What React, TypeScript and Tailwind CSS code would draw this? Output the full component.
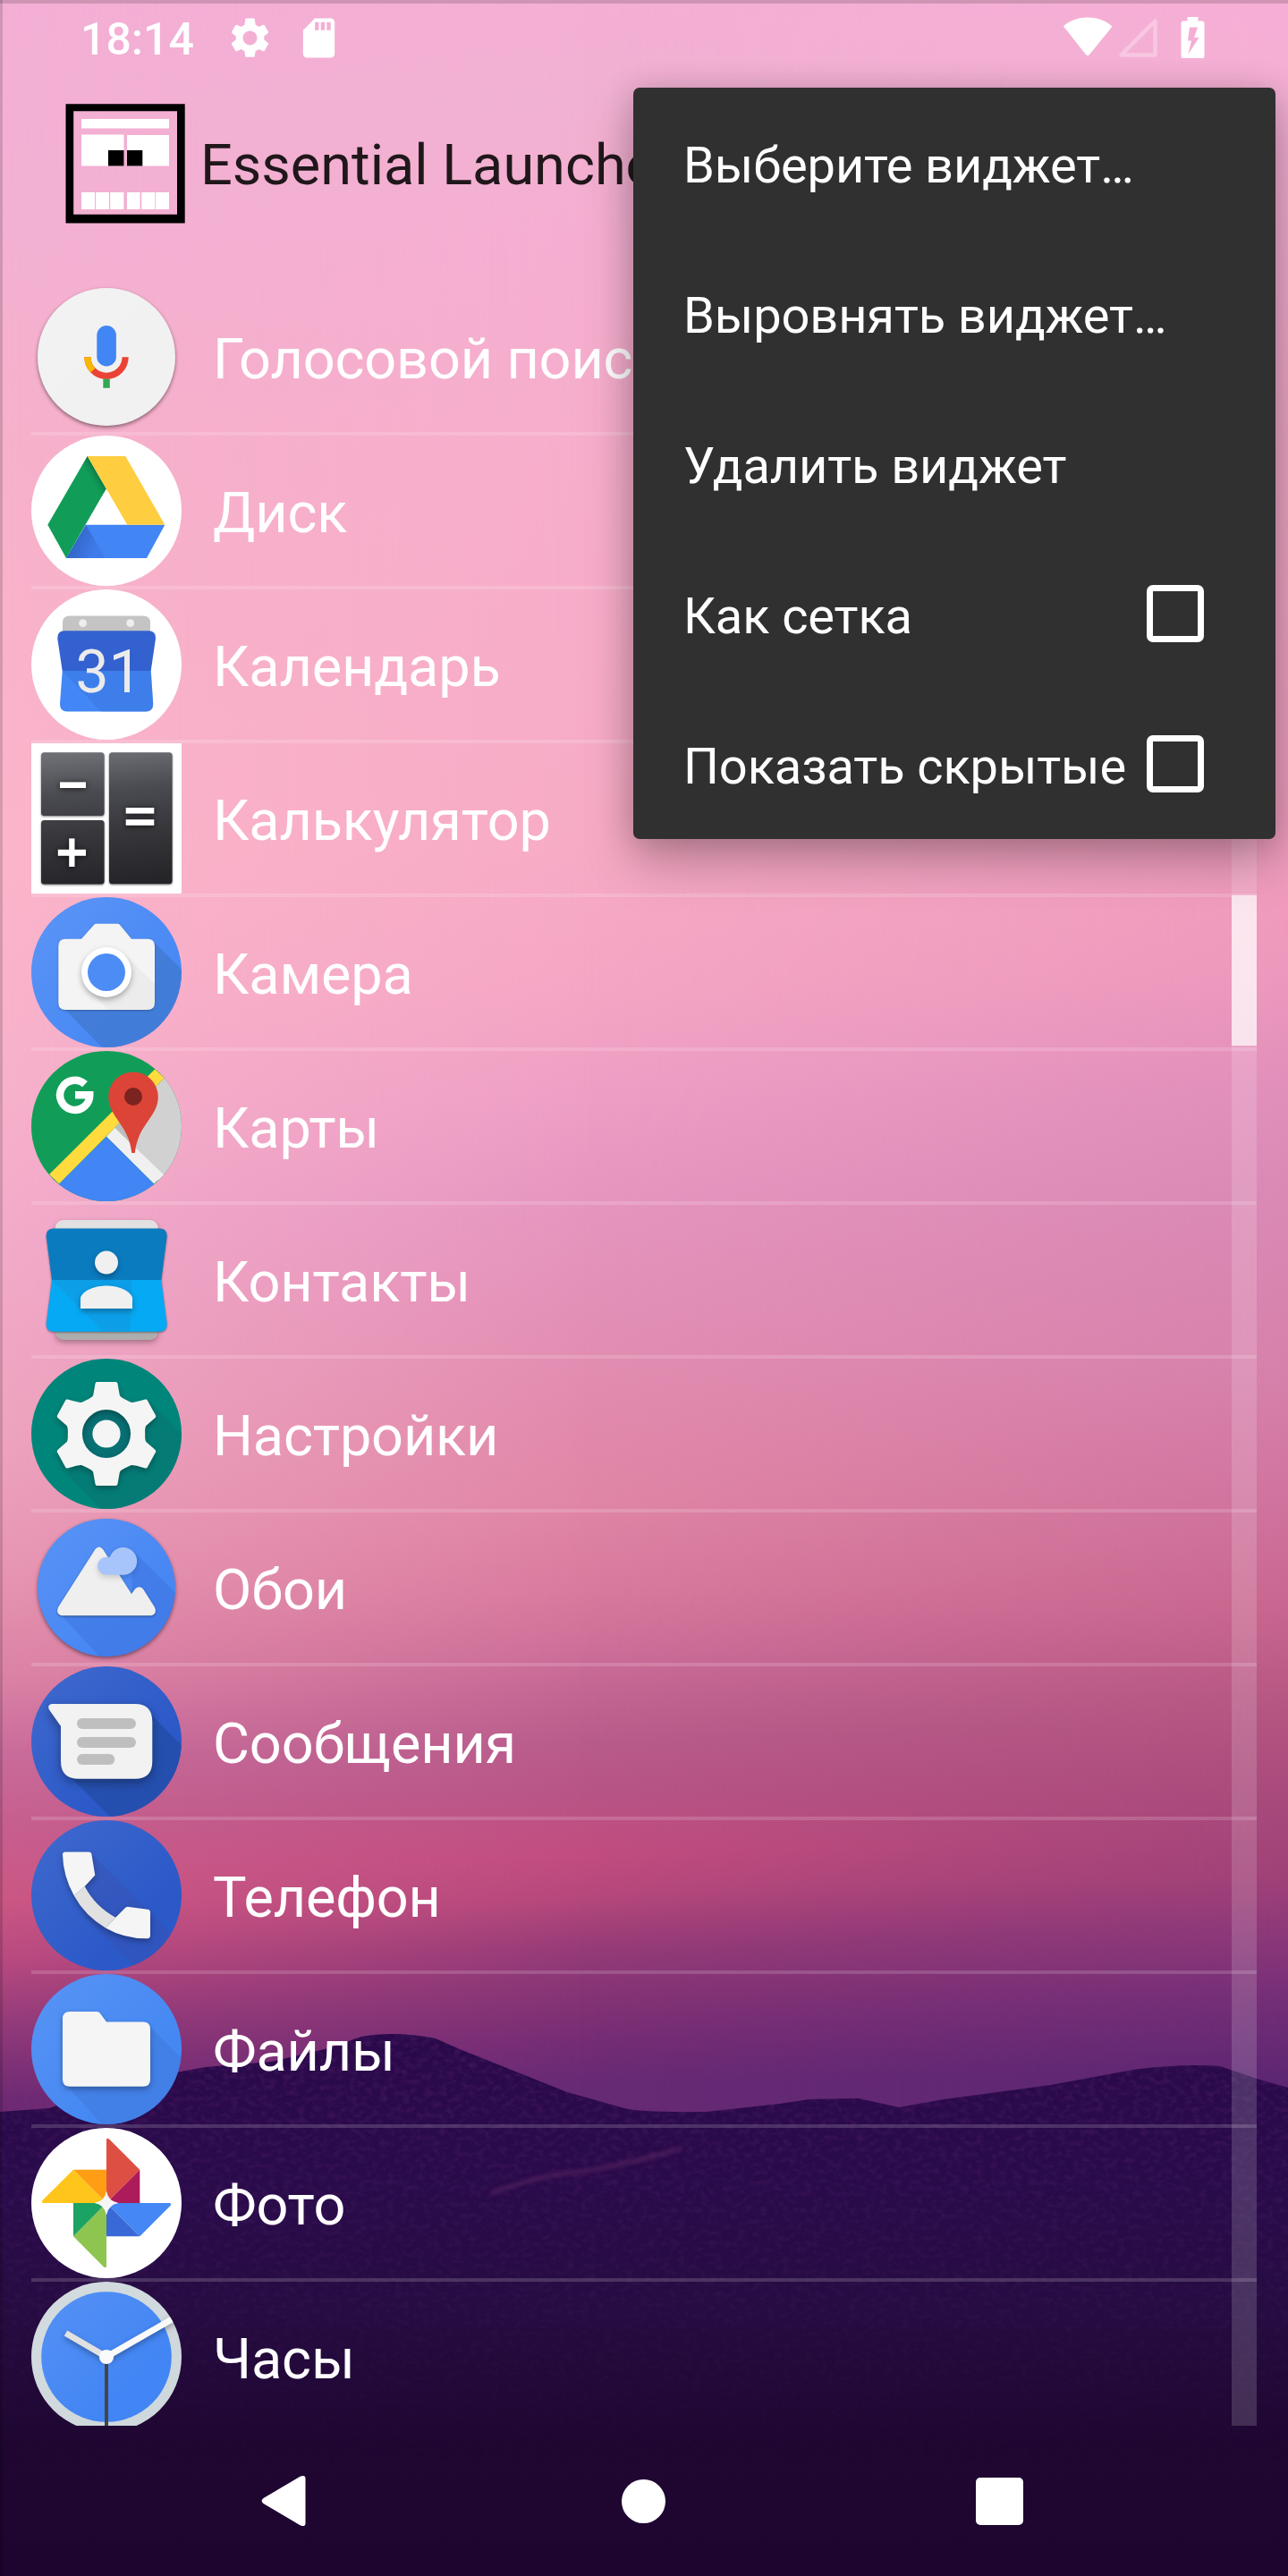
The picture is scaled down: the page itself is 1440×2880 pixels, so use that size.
import type { ReactNode } from "react";

function Wallpaper() {
  const hills =
    "M0 2361 L55 2357 L100 2342 L138 2331 L197 2317 L230 2311 L303 2305 L367 2290 L404 2277 Q441 2270 487 2279 L514 2291 L579 2317 L634 2339 L698 2357 Q716 2362 790 2361 L872 2352 L905 2347 L960 2346 L1005 2356 L1056 2347 L1175 2331 L1267 2314 Q1322 2307 1364 2310 L1405 2324 L1440 2334 V2880 H0 Z";
  return (
    <svg className="absolute inset-0" width="1440" height="2880" viewBox="0 0 1440 2880">
      <defs>
        <linearGradient id="skyLeft" gradientUnits="userSpaceOnUse" x1="0" y1="0" x2="0" y2="2400">
          <stop offset="0" stopColor="#f4afd5" />
          <stop offset="0.096" stopColor="#f3b1d3" />
          <stop offset="0.21" stopColor="#f7b1cb" />
          <stop offset="0.396" stopColor="#fbb5ca" />
          <stop offset="0.51" stopColor="#f7b1cb" />
          <stop offset="0.574" stopColor="#f3abca" />
          <stop offset="0.67" stopColor="#eea3be" />
          <stop offset="0.733" stopColor="#e795b2" />
          <stop offset="0.78" stopColor="#dc83a6" />
          <stop offset="0.817" stopColor="#ca6c9b" />
          <stop offset="0.848" stopColor="#c7608f" />
          <stop offset="0.885" stopColor="#cb5785" />
          <stop offset="0.913" stopColor="#b84a80" />
          <stop offset="0.944" stopColor="#923a7a" />
          <stop offset="0.978" stopColor="#6f2a74" />
        </linearGradient>
        <linearGradient id="skyMid" gradientUnits="userSpaceOnUse" x1="-40" y1="0" x2="40" y2="2400">
          <stop offset="0" stopColor="#f5aed5" />
          <stop offset="0.054" stopColor="#f1b1d1" />
          <stop offset="0.125" stopColor="#f5aed0" />
          <stop offset="0.25" stopColor="#f6adca" />
          <stop offset="0.4" stopColor="#f7abc5" />
          <stop offset="0.467" stopColor="#f5a6c4" />
          <stop offset="0.521" stopColor="#ee9ec4" />
          <stop offset="0.567" stopColor="#e696bf" />
          <stop offset="0.625" stopColor="#e38fb5" />
          <stop offset="0.708" stopColor="#e086a6" />
          <stop offset="0.75" stopColor="#d87a9e" />
          <stop offset="0.779" stopColor="#cc6e98" />
          <stop offset="0.82" stopColor="#b85c8b" />
          <stop offset="0.842" stopColor="#b85587" />
          <stop offset="0.873" stopColor="#c24d7f" />
          <stop offset="0.892" stopColor="#b6487c" />
          <stop offset="0.917" stopColor="#953b77" />
          <stop offset="0.958" stopColor="#762d74" />
          <stop offset="0.98" stopColor="#672a75" />
        </linearGradient>
        <linearGradient id="skyRight" gradientUnits="userSpaceOnUse" x1="0" y1="0" x2="0" y2="2400">
          <stop offset="0" stopColor="#f6aed6" />
          <stop offset="0.042" stopColor="#f4afd3" />
          <stop offset="0.2" stopColor="#eda5c4" />
          <stop offset="0.42" stopColor="#f09bbd" />
          <stop offset="0.458" stopColor="#ec97bc" />
          <stop offset="0.51" stopColor="#e08eba" />
          <stop offset="0.554" stopColor="#da89b5" />
          <stop offset="0.637" stopColor="#d681ab" />
          <stop offset="0.7" stopColor="#cf739d" />
          <stop offset="0.75" stopColor="#c8668f" />
          <stop offset="0.792" stopColor="#b65782" />
          <stop offset="0.833" stopColor="#a94b7c" />
          <stop offset="0.875" stopColor="#9f4178" />
          <stop offset="0.904" stopColor="#8a3779" />
          <stop offset="0.93" stopColor="#752f77" />
          <stop offset="0.97" stopColor="#5c2672" />
        </linearGradient>
        <linearGradient id="fadeMid" x1="0" x2="1" y1="0" y2="0">
          <stop offset="0" stopColor="#000" />
          <stop offset="0.45" stopColor="#fff" />
        </linearGradient>
        <linearGradient id="fadeRight" x1="0" x2="1" y1="0" y2="0">
          <stop offset="0.45" stopColor="#000" />
          <stop offset="1" stopColor="#fff" />
        </linearGradient>
        <mask id="maskMid">
          <rect width="1440" height="2880" fill="url(#fadeMid)" />
        </mask>
        <mask id="maskRight">
          <rect width="1440" height="2880" fill="url(#fadeRight)" />
        </mask>
        <linearGradient id="ground" gradientUnits="userSpaceOnUse" x1="0" y1="2270" x2="0" y2="2880">
          <stop offset="0" stopColor="#2a094a" />
          <stop offset="0.3" stopColor="#290b4a" />
          <stop offset="0.5" stopColor="#260c42" />
          <stop offset="0.75" stopColor="#1f0732" />
          <stop offset="1" stopColor="#1e052f" />
        </linearGradient>
        <linearGradient id="grainFade" x1="0" x2="0" y1="0" y2="1">
          <stop offset="0" stopColor="#fff" />
          <stop offset="1" stopColor="#000" />
        </linearGradient>
        <mask id="grainMask" maskUnits="userSpaceOnUse" x="0" y="2260" width="1440" height="620">
          <rect y="2260" width="1440" height="500" fill="url(#grainFade)" />
        </mask>
        <filter id="grain" filterUnits="userSpaceOnUse" x="0" y="2260" width="1440" height="620">
          <feTurbulence type="fractalNoise" baseFrequency="0.12 0.16" numOctaves="2" seed="4" result="n" />
          <feColorMatrix in="n" values="0 0 0 0 0.3  0 0 0 0 0.06  0 0 0 0 0.32  0 2 0 0 -0.8" />
          <feComposite in2="SourceGraphic" operator="in" />
        </filter>
        <filter id="soft">
          <feGaussianBlur stdDeviation="2" />
        </filter>
      </defs>
      <rect width="1440" height="2880" fill="url(#skyLeft)" />
      <rect width="1440" height="2880" fill="url(#skyMid)" mask="url(#maskMid)" />
      <rect width="1440" height="2880" fill="url(#skyRight)" mask="url(#maskRight)" />
      <path d={hills} fill="url(#ground)" />
      <g mask="url(#grainMask)">
        <path d={hills} filter="url(#grain)" opacity="0.22" />
      </g>
      <path d="M548 2453 Q600 2432 650 2428 Q700 2420 762 2402" fill="none" stroke="#54205f" strokeWidth="5" opacity="0.7" filter="url(#soft)" />
      <rect width="1440" height="4" fill="#000" opacity="0.15" />
      <rect width="3" height="2880" fill="#000" opacity="0.15" />
    </svg>
  );
}

const glyphShadow = "drop-shadow-[0_3px_3px_rgba(0,0,0,0.3)]";

function Icon({
  id,
  children,
  bg,
  r = 84,
  sheen = 0.1,
}: {
  id: string;
  children: ReactNode;
  bg?: string;
  r?: number;
  sheen?: number;
}) {
  return (
    <svg className="block shrink-0" width="168" height="168" viewBox="0 0 168 168">
      <defs>
        <clipPath id={id}>
          <circle cx="84" cy="84" r={r} />
        </clipPath>
        <linearGradient id={id + "Sheen"} x1="0" y1="0" x2="0.7" y2="0.7">
          <stop offset="0" stopColor="#fff" stopOpacity={sheen} />
          <stop offset="1" stopColor="#fff" stopOpacity="0" />
        </linearGradient>
      </defs>
      {bg && (
        <g className={r < 84 ? "drop-shadow-[0_2px_2px_rgba(0,0,0,0.45)]" : ""}>
          <circle cx="84" cy="84" r={r} fill={bg} />
          <circle cx="84" cy="84" r={r} fill={`url(#${id}Sheen)`} />
        </g>
      )}
      <g clipPath={bg ? `url(#${id})` : undefined}>{children}</g>
    </svg>
  );
}

const MicIcon = () => (
  <Icon id="mic" bg="#f1f1f1" r={77}>
    <rect x="73.3" y="49" width="21.6" height="45.5" rx="10.8" fill="#4285f4" />
    <path d="M62.9 84.2 A21.1 21.1 0 0 0 105.1 84.2" fill="none" stroke="#ea4335" strokeWidth="7.2" />
    <path d="M62.9 84.2 A21.1 21.1 0 0 0 69 99" fill="none" stroke="#f9b602" strokeWidth="7.2" />
    <rect x="80.3" y="108.6" width="7.5" height="10.2" fill="#34a853" />
  </Icon>
);

const DriveIcon = () => (
  <Icon id="drive" bg="#fff">
    <defs>
      <linearGradient id="driveShade" gradientUnits="userSpaceOnUse" x1="48" y1="118" x2="72" y2="128">
        <stop offset="0" stopColor="#3367c9" />
        <stop offset="1" stopColor="#3f7ceb" />
      </linearGradient>
      <linearGradient id="driveFold" gradientUnits="userSpaceOnUse" x1="73" y1="42" x2="63" y2="48">
        <stop offset="0" stopColor="#0b6e3d" stopOpacity="0.7" />
        <stop offset="1" stopColor="#119d58" stopOpacity="0" />
      </linearGradient>
    </defs>
    <path d="M61 99.8 H149.3 L129 137 H39 Z" fill="#4285f4" />
    <path d="M61 99.8 L83 137 H39 Z" fill="url(#driveShade)" />
    <path d="M62.7 23 L83.7 59.6 L39 137 L18.3 99.8 Z" fill="#119d58" />
    <path d="M62.7 23 L83.7 59.6 L78 69 L57 33 Z" fill="url(#driveFold)" />
    <path d="M62.7 23 H105.3 L149.3 99.8 H107.3 Z" fill="#ffcd40" />
  </Icon>
);

const CalendarIcon = () => (
  <Icon id="cal" bg="#fff">
    <path d="M35 50 V37 Q35 29.4 43 29.4 H125 Q133 29.4 133 37 V50 Z" fill="#c4c4c4" />
    <circle cx="57.6" cy="37.7" r="4.4" fill="#eee" />
    <circle cx="110.7" cy="37.7" r="4.4" fill="#eee" />
    <path d="M37 46.3 H131 Q139.5 46.3 139 55 L133.7 91 H34.7 L29.3 55 Q29 46.3 37 46.3 Z" fill="#3361d0" />
    <path d="M34.7 91 H133.7 L136.2 128 Q136.2 136.5 128 136.5 H40 Q32 136.5 32 128 Z" fill="#4386f5" />
    <path d="M34.7 91 H133.7 L136.2 128 Q136.2 136.5 128 136.5 H78 Z" fill="#3b78e2" opacity="0.55" />
    <text x="86.5" y="115.3" textAnchor="middle" fontFamily="Roboto, sans-serif" fontSize="66" fill="#ebebeb">
      31
    </text>
  </Icon>
);

const CalculatorIcon = () => (
  <svg className="block shrink-0" width="168" height="168" viewBox="0 0 168 168">
    <defs>
      <linearGradient id="keys" gradientUnits="userSpaceOnUse" x1="70" y1="10" x2="84" y2="158">
        <stop offset="0" stopColor="#6e6f74" />
        <stop offset="0.3" stopColor="#4a4b51" />
        <stop offset="0.6" stopColor="#37373c" />
        <stop offset="1" stopColor="#252429" />
      </linearGradient>
    </defs>
    <rect width="168" height="168" fill="#fff" />
    <g fill="url(#keys)" className="drop-shadow-[0_1px_1px_rgba(0,0,0,0.5)]">
      <rect x="11" y="10.3" width="70.6" height="70.6" rx="3.5" />
      <rect x="11" y="86" width="70.6" height="71.4" rx="3.5" />
      <rect x="87" y="10.3" width="70.6" height="147" rx="3.5" />
    </g>
    <g fill="#fff" className="drop-shadow-[0_1px_3px_rgba(0,0,0,0.7)]">
      <rect x="32" y="43.4" width="29" height="6.6" />
      <rect x="29.8" y="118.8" width="31.2" height="7" />
      <rect x="42.2" y="106.4" width="6.3" height="31.6" />
      <rect x="105.7" y="72" width="31.6" height="6.6" />
      <rect x="105.7" y="85.2" width="31.6" height="6.6" />
    </g>
  </svg>
);

const CameraIcon = () => (
  <Icon id="cam" bg="#4989f5">
    <path d="M136 49 L230 143 V230 H140 L36 124 Z" fill="#3a6cb8" opacity="0.45" />
    <g className="drop-shadow-[0_1px_1px_rgba(0,0,0,0.25)]">
      <path d="M38.3 46.7 H56 L70 31 Q71 29.8 73 29.8 H96 Q98 29.8 99 31 L112 46.7 H130 Q138 46.7 138 54.7 V118 Q138 126 130 126 H38.3 Q30.3 126 30.3 118 V54.7 Q30.3 46.7 38.3 46.7 Z" fill="#f4f4f4" />
    </g>
    <path d="M104 64 L138 97 V118 Q138 126 130 126 H86 L64 104 Z" fill="#000" opacity="0.03" />
    <circle cx="84" cy="84" r="28" fill="#fff" className={glyphShadow} />
    <circle cx="84" cy="84" r="21" fill="#4c8cf5" />
  </Icon>
);

const MapsIcon = () => (
  <Icon id="maps" bg="#119d58" sheen={0}>
    <path d="M148.7 30.3 L84 95.8 L148 150 L180 150 V30 Z" fill="#d1d1d1" />
    <path d="M93.3 85.8 L148.2 138.5 L137 148.4 L84 95.8 Z" fill="#f0f0f0" />
    <path d="M84 95.8 L137 148.4 V170 H31 V148.4 Z" fill="#4285f4" />
    <path d="M138.3 20.3 L148.7 30.3 L31 148.4 L20 138 Z" fill="#ffdb3e" />
    <path d="M93.3 85.8 L99 80 L112 101 V104 Z" fill="#bdbdbd" />
    <path d="M114 23.5 A27.8 27.8 0 0 1 141.8 51 C141.8 74 119 82 115.8 114 H112.2 C109 82 86.2 74 86.2 51 A27.8 27.8 0 0 1 114 23.5 Z" fill="#db4437" />
    <circle cx="114" cy="51" r="10" fill="#7b231e" />
    <path d="M60 37.2 A16.6 16.6 0 1 0 65.3 49.2 H49" fill="none" stroke="#fff" strokeWidth="8.4" />
  </Icon>
);

const ContactsIcon = () => (
  <Icon id="contacts">
    <defs>
      <linearGradient id="cardBack" x1="0" x2="0" y1="0" y2="1">
        <stop offset="0.5" stopColor="#e1e1e1" />
        <stop offset="0.6" stopColor="#adadad" />
      </linearGradient>
    </defs>
    <rect x="26.7" y="17" width="115" height="134" rx="9" fill="url(#cardBack)" className={glyphShadow} />
    <g className="drop-shadow-[0_1px_1px_rgba(0,0,0,0.4)]">
      <path d="M25 26.4 H143.5 Q152 26.4 151.7 35 L145.3 84 H23 L16.7 35 Q16.5 26.4 25 26.4 Z" fill="#0b7bbf" />
      <path d="M23 84 H145.3 L151.7 133 Q151.7 141.8 143.5 141.8 H25 Q16.7 141.8 16.7 133 Z" fill="#06a9f4" />
    </g>
    <path d="M23 84 H112 V116 L110 141.8 H80 Z" fill="#1397dc" opacity="0.55" />
    <g fill="#f0f0f0" className={glyphShadow}>
      <circle cx="84" cy="64.6" r="13" />
      <path d="M55 116 V104 C58 95 72 90.5 84 90.5 C96 90.5 110 95 113 104 V116 Z" />
    </g>
  </Icon>
);

const SettingsIcon = () => (
  <Icon id="settings" bg="#00857a" sheen={0}>
    <path d="M130 46 L230 146 V230 H140 L40 130 Z" fill="#0b6e71" opacity="0.45" />
    <circle cx="84" cy="84" r="30" fill="#086f73" />
    <path
      fillRule="evenodd"
      className={glyphShadow}
      fill="#f5f5f5"
      stroke="#f5f5f5"
      strokeWidth="4"
      strokeLinejoin="round"
      d="M73.5 28 H94.5 L97 42 Q98 45 111 50.8 Q114 51.5 128 47.5 L137.3 64.5 L127 73.4 Q124.8 76 125.2 84 Q124.8 92 127 94.6 L137.3 103.5 L128 120.5 Q114 116.5 111 117.2 Q98 123 97 126 L94.5 140 H73.5 L71 126 Q70 123 57 117.2 Q54 116.5 40 120.5 L30.7 103.5 L41 94.6 Q43.2 92 42.8 84 Q43.2 76 41 73.4 L30.7 64.5 L40 47.5 Q54 51.5 57 50.8 Q70 45 71 42 Z M84 55 A29 29 0 1 0 84 113 A29 29 0 1 0 84 55 Z"
    />
    <circle cx="84" cy="84" r="15.6" fill="#f5f5f5" />
  </Icon>
);

const WallpapersIcon = () => (
  <Icon id="walls" bg="#4787f4" r={77}>
    <path d="M114 43 L230 159 V230 H140 L32 113 L112 91 Z" fill="#3c72dd" opacity="0.5" />
    <path
      d="M71.5 41 Q75.7 36 80 41 L112 91 L116 85.5 Q120.7 81 125 85.5 L138 106 Q141 113.5 134 115.3 H34 Q27 113.5 30 106 Z"
      fill="#efefef"
      className="drop-shadow-[0_1px_1px_rgba(0,0,0,0.4)]"
    />
    <path
      d="M84 69.8 A9.8 9.8 0 1 1 84 49.8 H88 A15.4 15.4 0 1 1 104 69.8 Z"
      fill="#a7c5fa"
      className="drop-shadow-[0_3px_3px_rgba(0,0,0,0.15)]"
    />
  </Icon>
);

const MessagesIcon = () => (
  <Icon id="messages" bg="#2b59c8">
    <path d="M130 50 L230 150 V230 H150 L40 120 Z" fill="#214a9f" opacity="0.6" />
    <path
      d="M23 42 H116 Q135.3 42 135.3 62 V106 Q135.3 125.8 116 125.8 H53 Q33 125.8 33 106 V67 L20 48.5 Q17.5 43 23 42 Z"
      fill="#f2f2f2"
      className="drop-shadow-[0_4px_6px_rgba(0,0,0,0.35)]"
    />
    <g fill="#bfbfbf">
      <rect x="51" y="58" width="66" height="12" rx="6" />
      <rect x="51" y="79" width="66" height="12" rx="6" />
      <rect x="51" y="98" width="42.3" height="12" rx="6" />
    </g>
  </Icon>
);

const PhoneIcon = () => (
  <Icon id="phone" bg="#2b59c8">
    <path d="M66 36 L230 200 V260 H212 L60 108 Z" fill="#3a50b0" opacity="0.4" />
    <g className={glyphShadow}>
      <path d="M47.7 84.3 L59.7 74 Q72 97 94.3 108.7 L83 120.4 Q60 107 47.7 84.3 Z" fill="#e1e1e1" />
      <path d="M38 35.4 H64 Q67 35.4 67.4 38 L71.3 61.6 L59.7 74 L47.7 84.3 Q35.5 62 35 38.4 Q35 35.4 38 35.4 Z" fill="#f5f5f5" />
      <path d="M94.3 108.7 L105 98 Q107 96.2 109.5 96.9 L130 99.8 Q133 100.2 133 103 V129 Q133 132 130 132.3 Q104 132.5 83 120.4 Z" fill="#f5f5f5" />
    </g>
  </Icon>
);

const FilesIcon = () => (
  <Icon id="files" bg="#4588f3">
    <path d="M130 56 L230 156 V230 H136 L38 123 Z" fill="#3f76d8" opacity="0.45" />
    <path
      d="M43 42 H73 Q75.7 42 77 44 L84 53.5 H125 Q133 53.5 133 61.5 V117.8 Q133 125.8 125 125.8 H43 Q35 125.8 35 117.8 V50 Q35 42 43 42 Z"
      fill="#f5f5f5"
      className={glyphShadow}
    />
  </Icon>
);

const PhotosIcon = () => (
  <Icon id="photos" bg="#fff">
    <path d="M84 84 V13 Q84.5 11 87 12.5 L121.5 47 Z" fill="#de4f43" />
    <path d="M121.3 47 V84 H84 Z" fill="#ad1b5a" />
    <path d="M84 84 H155 Q157 84.5 155.5 87 L121.3 121.3 Z" fill="#4587f4" />
    <path d="M84 84 L121.3 121.3 H84 Z" fill="#3869d7" />
    <path d="M84 84 V155 Q83.5 157 81 155.5 L47 121.3 Z" fill="#8dc550" />
    <path d="M84 84 H47 V121.3 Z" fill="#1ca262" />
    <path d="M84 84 H13 Q11 83.5 12.5 81 L47 46.8 Z" fill="#ffc51b" />
    <path d="M47 46.8 H84 V84 Z" fill="#ff9e14" />
    <path d="M84 70.5 Q86 82 97.5 84 Q86 86 84 97.5 Q82 86 70.5 84 Q82 82 84 70.5 Z" fill="#f6f6f6" />
  </Icon>
);

const ClockIcon = () => (
  <Icon id="clock" bg="#cfd8dc">
    <circle cx="84" cy="84" r="72.8" fill="#4285f4" />
    <circle cx="84" cy="84" r="72.8" fill="url(#clockSheen)" />
    <g strokeWidth="7" className={glyphShadow}>
      <path d="M84 84 L38.5 57.5" stroke="#e1e1e1" />
      <path d="M84 84 L158 41.5" stroke="#fafafa" />
    </g>
    <path d="M84 84 V168" stroke="#454545" strokeWidth="4" />
    <circle cx="84" cy="84" r="8.1" fill="#fafafa" />
  </Icon>
);

const apps = [
  { name: "Голосовой поиск", Icon: MicIcon },
  { name: "Диск", Icon: DriveIcon },
  { name: "Календарь", Icon: CalendarIcon },
  { name: "Калькулятор", Icon: CalculatorIcon },
  { name: "Камера", Icon: CameraIcon },
  { name: "Карты", Icon: MapsIcon },
  { name: "Контакты", Icon: ContactsIcon },
  { name: "Настройки", Icon: SettingsIcon },
  { name: "Обои", Icon: WallpapersIcon },
  { name: "Сообщения", Icon: MessagesIcon },
  { name: "Телефон", Icon: PhoneIcon },
  { name: "Файлы", Icon: FilesIcon },
  { name: "Фото", Icon: PhotosIcon },
  { name: "Часы", Icon: ClockIcon },
];

const menu = [
  { label: "Выберите виджет…" },
  { label: "Выровнять виджет…" },
  { label: "Удалить виджет" },
  { label: "Как сетка", check: true },
  { label: "Показать скрытые", check: true },
];

function StatusBar() {
  return (
    <div className="flex h-[84px] shrink-0 items-start pr-[93px] pl-[90px] text-white">
      <span className="mt-[15px] w-[163px] text-[50px] leading-[58px] font-medium">18:14</span>
      <svg className="mt-[16px]" width="53" height="53" viewBox="0 0 24 24" fill="currentColor">
        <path d="M19.14 12.94c.04-.3.06-.61.06-.94 0-.32-.02-.64-.07-.94l2.03-1.58c.18-.14.23-.41.12-.61l-1.92-3.32c-.12-.22-.37-.29-.59-.22l-2.39.96c-.5-.38-1.03-.7-1.62-.94L14.4 2.4c-.04-.24-.24-.4-.48-.4h-3.84c-.24 0-.43.16-.47.41L9.25 5.35c-.59.24-1.13.57-1.62.94l-2.39-.96c-.22-.08-.47 0-.59.22L2.74 8.87c-.12.21-.08.47.12.61l2.03 1.58c-.05.3-.09.63-.09.94s.02.64.07.94l-2.03 1.58c-.18.14-.23.41-.12.61l1.92 3.32c.12.22.37.29.59.22l2.39-.96c.5.38 1.03.7 1.62.94l.36 2.54c.05.24.24.41.48.41h3.84c.24 0 .44-.17.47-.41l.36-2.54c.59-.24 1.13-.56 1.62-.94l2.39.96c.22.08.47 0 .59-.22l1.92-3.32c.12-.22.07-.47-.12-.61l-2.01-1.58zM12 15.6c-1.98 0-3.6-1.62-3.6-3.6s1.62-3.6 3.6-3.6 3.6 1.62 3.6 3.6-1.62 3.6-3.6 3.6z" />
      </svg>
      <svg className="mt-[16px] ml-[24px]" width="53" height="53" viewBox="0 0 24 24" fill="currentColor">
        <path d="M18 2h-8L4.02 8 4 20c0 1.100.9 2 2 2h12c1.100 0 2-.9 2-2V4c0-1.100-.9-2-2-2zm-6 6h-2V4h2v4zm3 0h-2V4h2v4zm3 0h-2V4h2v4z" />
      </svg>
      <svg className="mt-[18px] ml-auto" width="56" height="48" viewBox="0 0 56 48" fill="currentColor">
        <path d="M2.500 13.300 C.8 12.300 .8 11.500 2 10.300 C9 4.500 18 1.500 28 1.500 C38 1.500 47 4.500 54 10.300 C55.300 11.500 55.200 12 54.200 13.300 L30.500 42.500 Q28 45.500 25.500 42.500 Z" />
      </svg>
      <svg className="mt-[20px] ml-[6px]" width="46" height="46" viewBox="0 0 46 46" fill="none">
        <path d="M41.500 3.500 V41.500 H3.500 Z" stroke="#fff" strokeWidth="4.500" strokeLinejoin="round" opacity="0.3" />
      </svg>
      <svg className="mt-[19px] ml-[24px]" width="27" height="46" viewBox="0 0 27 46" fill="currentColor">
        <path fillRule="evenodd" d="M7.500 0 H19.500 V4.500 H24.500 Q26.500 4.500 26.500 7 V43.500 Q26.500 46 24.500 46 H2.500 Q.5 46 .5 43.500 V7 Q.5 4.500 2.500 4.500 H7.500 Z M10 11.500 L8 26.500 H12 L8.500 41.500 L20.500 23 H15 L19 11.500 Z" />
      </svg>
    </div>
  );
}

function Header() {
  return (
    <div className="flex h-[231px] shrink-0 items-start pt-[32px] pl-[73px]">
      <svg width="134" height="134" viewBox="73 116 134 134">
        <path fillRule="evenodd" d="M73.500 116.300 H206.700 V249.500 H73.500 Z M82.200 124.300 V239.700 H198 V124.300 Z" fill="#000" />
        <g fill="#fff">
          <rect x="91" y="133" width="98" height="10.500" />
          <rect x="91" y="150.500" width="47.500" height="35" />
          <rect x="142" y="151" width="47" height="34.500" />
          <rect x="91" y="215" width="15" height="19" />
          <rect x="107" y="215" width="15" height="19" />
          <rect x="123.200" y="215" width="15.200" height="19" />
          <rect x="142" y="215" width="14.500" height="19" />
          <rect x="158.300" y="215" width="15" height="19" />
          <rect x="174.200" y="215" width="14.800" height="19" />
        </g>
        <rect x="121" y="168" width="17.500" height="17.500" />
        <rect x="142" y="168" width="17.300" height="17.500" />
      </svg>
      <h1 className="mt-[32px] ml-[17px] text-[63px] leading-[74px] whitespace-nowrap text-black/87">Essential Launcher</h1>
    </div>
  );
}

function AppList() {
  return (
    <div className="relative mr-[35px] ml-[35px] h-[2397px] shrink-0 overflow-hidden">
      {apps.map(({ name, Icon }) => (
        <div key={name} className="flex h-[172px] items-start border-b-4 border-white/[0.16]">
          <Icon />
          <span className="pt-[3px] pl-[35px] text-[63px] leading-[168px] tracking-[-0.15px] whitespace-nowrap text-white">
            {name}
          </span>
        </div>
      ))}
      <div className="absolute top-0 right-0 h-full w-[28px] bg-white/[0.16] pt-[686px]">
        <div className="h-[168px] bg-white/70" />
      </div>
    </div>
  );
}

function PopupMenu() {
  return (
    <div className="absolute top-[98px] left-[708px] w-[718px] rounded-[7px] bg-[#303030] shadow-[0_28px_56px_rgba(0,0,0,0.22),0_4px_36px_rgba(0,0,0,0.18)]">
      {menu.map(({ label, check }) => (
        <div key={label} className="flex h-[168px] items-center justify-between pr-[80px] pl-[56px]">
          <span className="pt-[5px] text-[56px] leading-[66px] tracking-[-0.12px] whitespace-nowrap text-white">
            {label}
          </span>
          {check && <span className="size-[64px] rounded-[7px] border-7 border-white" />}
        </div>
      ))}
    </div>
  );
}

function NavBar() {
  return (
    <div className="flex h-[168px] items-center pl-[292px]">
      <svg width="50" height="58" viewBox="0 0 50 58" fill="#fff">
        <path d="M44 1.500 Q49.500 -.5 49.500 4 V54 Q49.500 58.500 44 56.500 L2.500 32 Q-1.200 29 2.500 26 Z" />
      </svg>
      <div className="ml-[353px] size-[49px] rounded-full bg-white" />
      <div className="ml-[347px] size-[53px] rounded-[5px] bg-white" />
    </div>
  );
}

export default function App() {
  return (
    <div className="relative h-[2880px] w-[1440px] overflow-hidden font-[Roboto,sans-serif]">
      <Wallpaper />
      <div className="relative flex h-full flex-col">
        <StatusBar />
        <Header />
        <AppList />
        <NavBar />
      </div>
      <PopupMenu />
    </div>
  );
}
